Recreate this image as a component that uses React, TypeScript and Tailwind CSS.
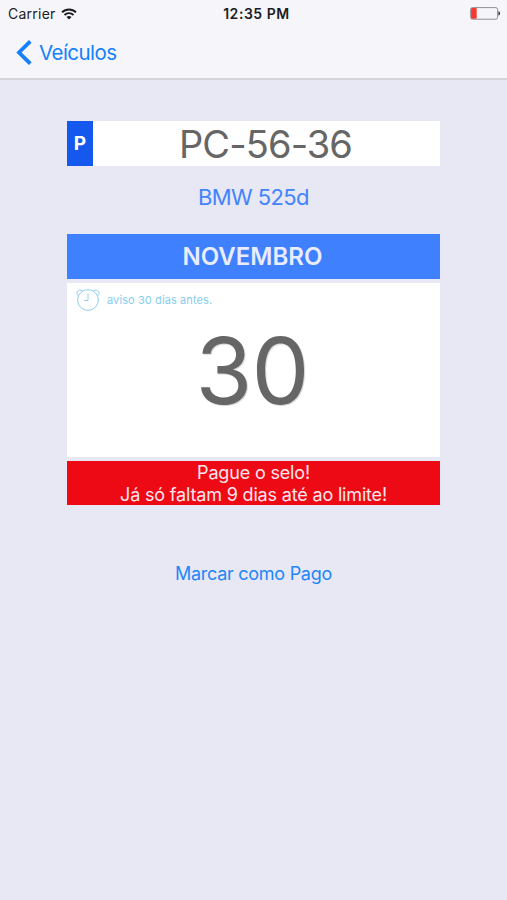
const vehicle = {
  country: 'P',
  plate: 'PC-56-36',
  model: 'BMW 525d',
  month: 'NOVEMBRO',
  day: 30,
  reminder: 'aviso 30 dias antes.',
}

function WifiIcon() {
  return (
    <svg width="16" height="12" viewBox="0 0 16 12" fill="none" stroke="#1c1c1e" strokeWidth="1.9">
      <path d="M1 4.4a10 10 0 0 1 14 0" />
      <path d="M3.5 7a6.4 6.4 0 0 1 9 0" />
      <path d="M8 11.6 5.5 9.1a3.6 3.6 0 0 1 5 0Z" fill="#1c1c1e" stroke="none" />
    </svg>
  )
}

function BatteryIcon() {
  return (
    <svg width="31" height="13" viewBox="0 0 31 13" fill="none">
      <rect x="0.6" y="0.6" width="27" height="11.6" rx="1.8" stroke="#8e8e93" />
      <rect x="1.1" y="1.1" width="5.6" height="10.6" rx="1" fill="#f5392f" />
      <path d="M28.4 4.2c2.2.4 2.2 4 0 4.4Z" fill="#3a3a3c" />
    </svg>
  )
}

function AlarmIcon() {
  return (
    <svg width="24" height="22" viewBox="0 0 24 22" fill="none" stroke="#8fd0ea" strokeLinecap="round">
      <circle cx="12" cy="11" r="10.4" />
      <path d="M2.2 6.6C-.8 4 1.6-.6 6.2 1.7M21.8 6.6C24.8 4 22.4-.6 17.8 1.7" />
      <path d="M12 5v6.5H8.3" />
    </svg>
  )
}

function StatusBar() {
  return (
    <div className="grid h-[27px] grid-cols-3 items-center pl-2 pr-1.5 text-[14px] text-[#1c1c1e]">
      <div className="flex items-center gap-[5px]">
        <span className="tracking-[0.25px]">Carrier</span>
        <WifiIcon />
      </div>
      <span className="pl-1 text-center font-semibold tracking-[0.55px]">12:35 PM</span>
      <div className="flex justify-end">
        <BatteryIcon />
      </div>
    </div>
  )
}

export default function App() {
  return (
    <div className="flex h-[900px] w-[507px] flex-col overflow-hidden bg-[#e7e8f4] font-['Inter',sans-serif]">
      <header className="h-20 border-b-2 border-[#d5d6dc] bg-[#f6f6fa]">
        <StatusBar />
        <button className="flex h-[50px] items-center gap-[7px] pl-4 text-[20.5px] tracking-[-0.55px] text-[#1480fb]">
          <svg width="16" height="25" viewBox="0 0 16 25" fill="none" stroke="currentColor" strokeWidth="3.8">
            <path d="M14.3 1.3 3 12.5l11.3 11.2" />
          </svg>
          <span className="pt-0.5">Veículos</span>
        </button>
      </header>

      <main className="mx-auto flex w-[373px] flex-col pt-[41px] text-center">
        <div className="flex h-[45px] bg-white">
          <div className="flex w-[26px] items-center justify-center bg-[#1458ee] pt-0.5 text-[19px] font-bold text-white">
            {vehicle.country}
          </div>
          <div className="flex flex-1 items-center justify-center pt-px pr-0.5 text-[38px] tracking-[-0.9px] text-[#666666]">
            {vehicle.plate}
          </div>
        </div>

        <p className="mt-[15px] h-[33px] text-[22px] leading-8 tracking-[-0.6px] text-[#4384fb]">{vehicle.model}</p>

        <h1 className="mt-5 h-[45px] bg-[#3f80ff] pr-0.5 text-[24px] leading-[46px] font-semibold text-[#e8ecfb]">
          {vehicle.month}
        </h1>

        <section className="mt-1 flex h-[174px] flex-col bg-white">
          <div className="flex items-center gap-[7px] pt-1.5 pl-[9px] text-[11px] tracking-[0.1px] text-[#86cdf0]">
            <AlarmIcon />
            {vehicle.reminder}
          </div>
          <div className="mt-[10px] pr-[3px] text-[92px] leading-[100px] tracking-[-1px] text-[#666666] [text-shadow:1px_1px_1px_#d4d4d4]">
            {vehicle.day}
          </div>
        </section>

        <div className="mt-1 h-11 bg-[#ee0a15] pt-px text-[18px] leading-[21.5px] tracking-[-0.17px] text-[#fbe5ec]">
          <p>Pague o selo!</p>
          <p>Já só faltam 9 dias até ao limite!</p>
        </div>

        <button className="mt-[55px] text-[18px] leading-7 tracking-[-0.28px] text-[#2386f8]">Marcar como Pago</button>
      </main>
    </div>
  )
}
